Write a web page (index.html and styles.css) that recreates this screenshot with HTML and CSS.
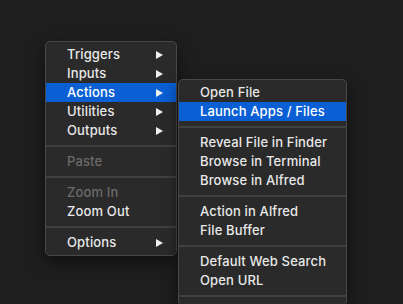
FILE: index.html
```html
<!DOCTYPE html>
<html>
<head>
<meta charset="utf-8">
<link rel="stylesheet" href="styles.css">
</head>
<body>
<div class="stage">
  <div class="menu main">
    <div class="item">Triggers<span class="arrow"></span></div>
    <div class="item">Inputs<span class="arrow"></span></div>
    <div class="item active">Actions<span class="arrow"></span></div>
    <div class="item">Utilities<span class="arrow"></span></div>
    <div class="item">Outputs<span class="arrow"></span></div>
    <div class="sep"></div>
    <div class="item disabled">Paste</div>
    <div class="sep"></div>
    <div class="item disabled">Zoom In</div>
    <div class="item">Zoom Out</div>
    <div class="sep"></div>
    <div class="item">Options<span class="arrow"></span></div>
  </div>
  <div class="menu sub">
    <div class="item">Open File</div>
    <div class="item active">Launch Apps / Files</div>
    <div class="sep"></div>
    <div class="item">Reveal File in Finder</div>
    <div class="item">Browse in Terminal</div>
    <div class="item">Browse in Alfred</div>
    <div class="sep"></div>
    <div class="item">Action in Alfred</div>
    <div class="item">File Buffer</div>
    <div class="sep"></div>
    <div class="item">Default Web Search</div>
    <div class="item">Open URL</div>
    <div class="sep"></div>
  </div>
</div>
</body>
</html>
```
FILE: styles.css
```css
html, body {
  margin: 0;
  padding: 0;
  width: 403px;
  height: 304px;
  overflow: hidden;
  background: #1e1e1e;
}
.stage {
  display: flex;
  align-items: flex-start;
  padding: 41px 0 0 45px;
  gap: 1px;
  font-family: "Inter", "Roboto", sans-serif;
  font-size: 13px;
  font-weight: 500;
  color: #e8e8e8;
}
.menu {
  background: #2a2a2a;
  border: 1px solid #484848;
  border-radius: 5px;
  padding: 3px 0;
  box-shadow: 0 6px 16px rgba(0,0,0,0.5);
  flex: none;
}
.main {
  width: 130px;
}
.sub {
  width: 167px;
  margin-top: 38px;
}
.item {
  height: 19px;
  line-height: 19px;
  padding: 0 13px 0 21px;
  display: flex;
  align-items: center;
  justify-content: space-between;
  white-space: nowrap;
  letter-spacing: 0.15px;
}
.item.active {
  background: #0a5fd5;
  color: #ffffff;
}
.item.disabled {
  color: #6a6a6a;
}
.arrow {
  width: 0;
  height: 0;
  border-left: 7px solid #f0f0f0;
  border-top: 4px solid transparent;
  border-bottom: 4px solid transparent;
}
.sep {
  height: 2px;
  margin: 5px 0;
  background: #404040;
}
```
